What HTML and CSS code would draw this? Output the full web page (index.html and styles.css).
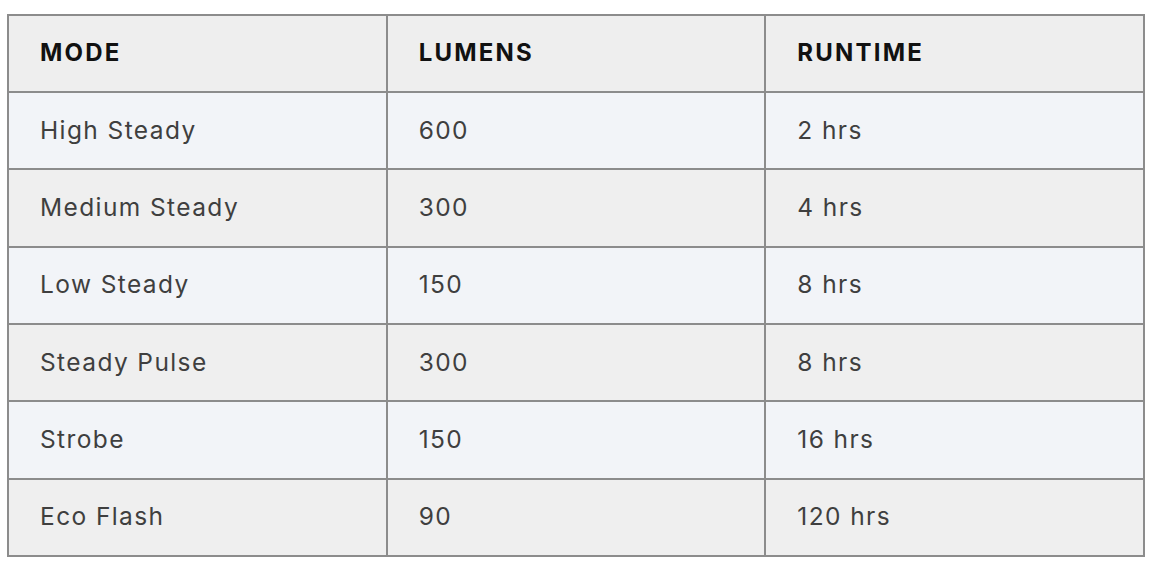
FILE: index.html
```html
<!DOCTYPE html>
<html>
<head>
<meta charset="utf-8">
<link rel="stylesheet" href="styles.css">
</head>
<body>
<table class="spec">
  <thead>
    <tr><th>MODE</th><th>LUMENS</th><th>RUNTIME</th></tr>
  </thead>
  <tbody>
    <tr><td>High Steady</td><td>600</td><td>2 hrs</td></tr>
    <tr><td>Medium Steady</td><td>300</td><td>4 hrs</td></tr>
    <tr><td>Low Steady</td><td>150</td><td>8 hrs</td></tr>
    <tr><td>Steady Pulse</td><td>300</td><td>8 hrs</td></tr>
    <tr><td>Strobe</td><td>150</td><td>16 hrs</td></tr>
    <tr><td>Eco Flash</td><td>90</td><td>120 hrs</td></tr>
  </tbody>
</table>
</body>
</html>
```
FILE: styles.css
```css
html, body {
  margin: 0;
  background: #ffffff;
}
body {
  padding: 14px 0 0 7px;
  font-family: "Inter", "Liberation Sans", sans-serif;
}
.spec {
  border-collapse: collapse;
  width: 1138px;
  table-layout: fixed;
  border: 2px solid #8c8c8c;
}
.spec th, .spec td {
  border: 2px solid #8c8c8c;
  height: 73.35px;
  padding: 0 0 2px 31px;
  text-align: left;
  vertical-align: middle;
}
.spec thead th {
  height: 73px;
  background: #eeeeee;
  color: #111111;
  font-size: 24px;
  font-weight: 700;
  letter-spacing: 2.2px;
}
.spec td {
  color: #3f3f3f;
  font-size: 24.5px;
  font-weight: 400;
  letter-spacing: 1.4px;
}
.spec tbody tr:nth-child(odd) td {
  background: #f2f4f8;
}
.spec tbody tr:nth-child(even) td {
  background: #efefef;
}
```
